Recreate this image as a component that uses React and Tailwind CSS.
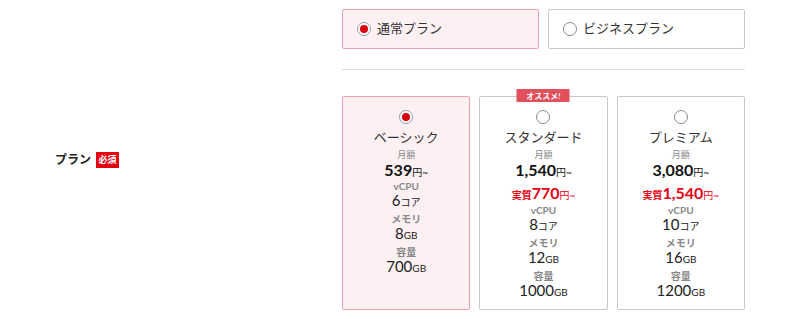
import React from "react";

const font = { fontFamily: 'Lato, "Noto Sans CJK JP", "Noto Sans", sans-serif' };

function Radio({ checked }) {
  return (
    <span
      className={`flex h-[14px] w-[14px] shrink-0 items-center justify-center rounded-full border bg-white ${
        checked ? "border-[#9a9a9a]" : "border-[#8a8a8a]"
      }`}
    >
      {checked && <span className="h-[8px] w-[8px] rounded-full bg-[#d7000f]" />}
    </span>
  );
}

const plans = [
  { name: "ベーシック", price: "539", cpu: "6", mem: "8", disk: "700", checked: true },
  { name: "スタンダード", price: "1,540", real: "770", cpu: "8", mem: "12", disk: "1000", badge: true },
  { name: "プレミアム", price: "3,080", real: "1,540", cpu: "10", mem: "16", disk: "1200" },
];

function Spec({ label, value, unit }) {
  return (
    <>
      <div className="text-[10px] font-bold leading-[15px] text-[#888]">{label}</div>
      <div className="mb-[3px] mt-[-3px] text-[15px] leading-[18px] text-[#222]">
        {value}
        <span className="text-[10px] leading-none">{unit}</span>
      </div>
    </>
  );
}

export default function App() {
  return (
    <div className="flex h-[319px] w-[800px] items-center bg-white" style={font}>
      <div className="flex w-[342px] items-center pl-[55px]">
        <span className="text-[12px] font-bold text-[#222]">プラン</span>
        <span className="ml-[5px] flex h-[16px] w-[23px] items-center justify-center bg-[#e60012] text-[9px] font-bold text-white">
          必須
        </span>
      </div>
      <div className="flex h-full w-[403px] flex-col pt-[9px]">
        <div className="grid grid-cols-2 gap-[9px]">
          <div className="flex h-[40px] items-center gap-[6px] rounded-[2px] border border-[#f1a2b2] bg-[#fcf0f2] pl-[14px] text-[13px] text-[#333]">
            <Radio checked />
            通常プラン
          </div>
          <div className="flex h-[40px] items-center gap-[6px] rounded-[2px] border border-[#c8c8c8] bg-white pl-[14px] text-[13px] text-[#333]">
            <Radio />
            ビジネスプラン
          </div>
        </div>
        <div className="mt-[20px] border-t border-[#dcdcdc]" />
        <div className="mt-[26px] grid h-[214px] grid-cols-3 gap-[9px]">
          {plans.map((p) => (
            <div
              key={p.name}
              className={`relative flex flex-col items-center rounded-[2px] border pt-[13px] text-center ${
                p.checked ? "border-[#f1a2b2] bg-[#fcf0f2]" : "border-[#c8c8c8] bg-white"
              }`}
            >
              {p.badge && (
                <span className="absolute left-1/2 top-[-8px] flex h-[13px] w-[53px] -translate-x-1/2 items-center justify-center bg-[#e2505b] text-[8px] font-bold leading-none text-white">
                  オススメ!
                </span>
              )}
              <Radio checked={p.checked} />
              <div className="mt-[4px] text-[13px] leading-[18px] text-[#333]">{p.name}</div>
              <div className="mt-[1px] text-[9px] leading-[15px] text-[#888]">月額</div>
              <div className="mt-[-1px] text-[16px] font-bold leading-[18px] text-[#111]">
                {p.price}
                <span className="text-[10px] font-normal leading-none">円~</span>
              </div>
              {p.real && (
                <div className="mt-[4px] text-[16px] font-bold leading-[20px] text-[#e60012]">
                  <span className="text-[10px] leading-none">実質</span>
                  {p.real}
                  <span className="text-[10px] font-normal leading-none">円~</span>
                </div>
              )}
              <Spec label="vCPU" value={p.cpu} unit="コア" />
              <Spec label="メモリ" value={p.mem} unit="GB" />
              <Spec label="容量" value={p.disk} unit="GB" />
            </div>
          ))}
        </div>
      </div>
    </div>
  );
}
